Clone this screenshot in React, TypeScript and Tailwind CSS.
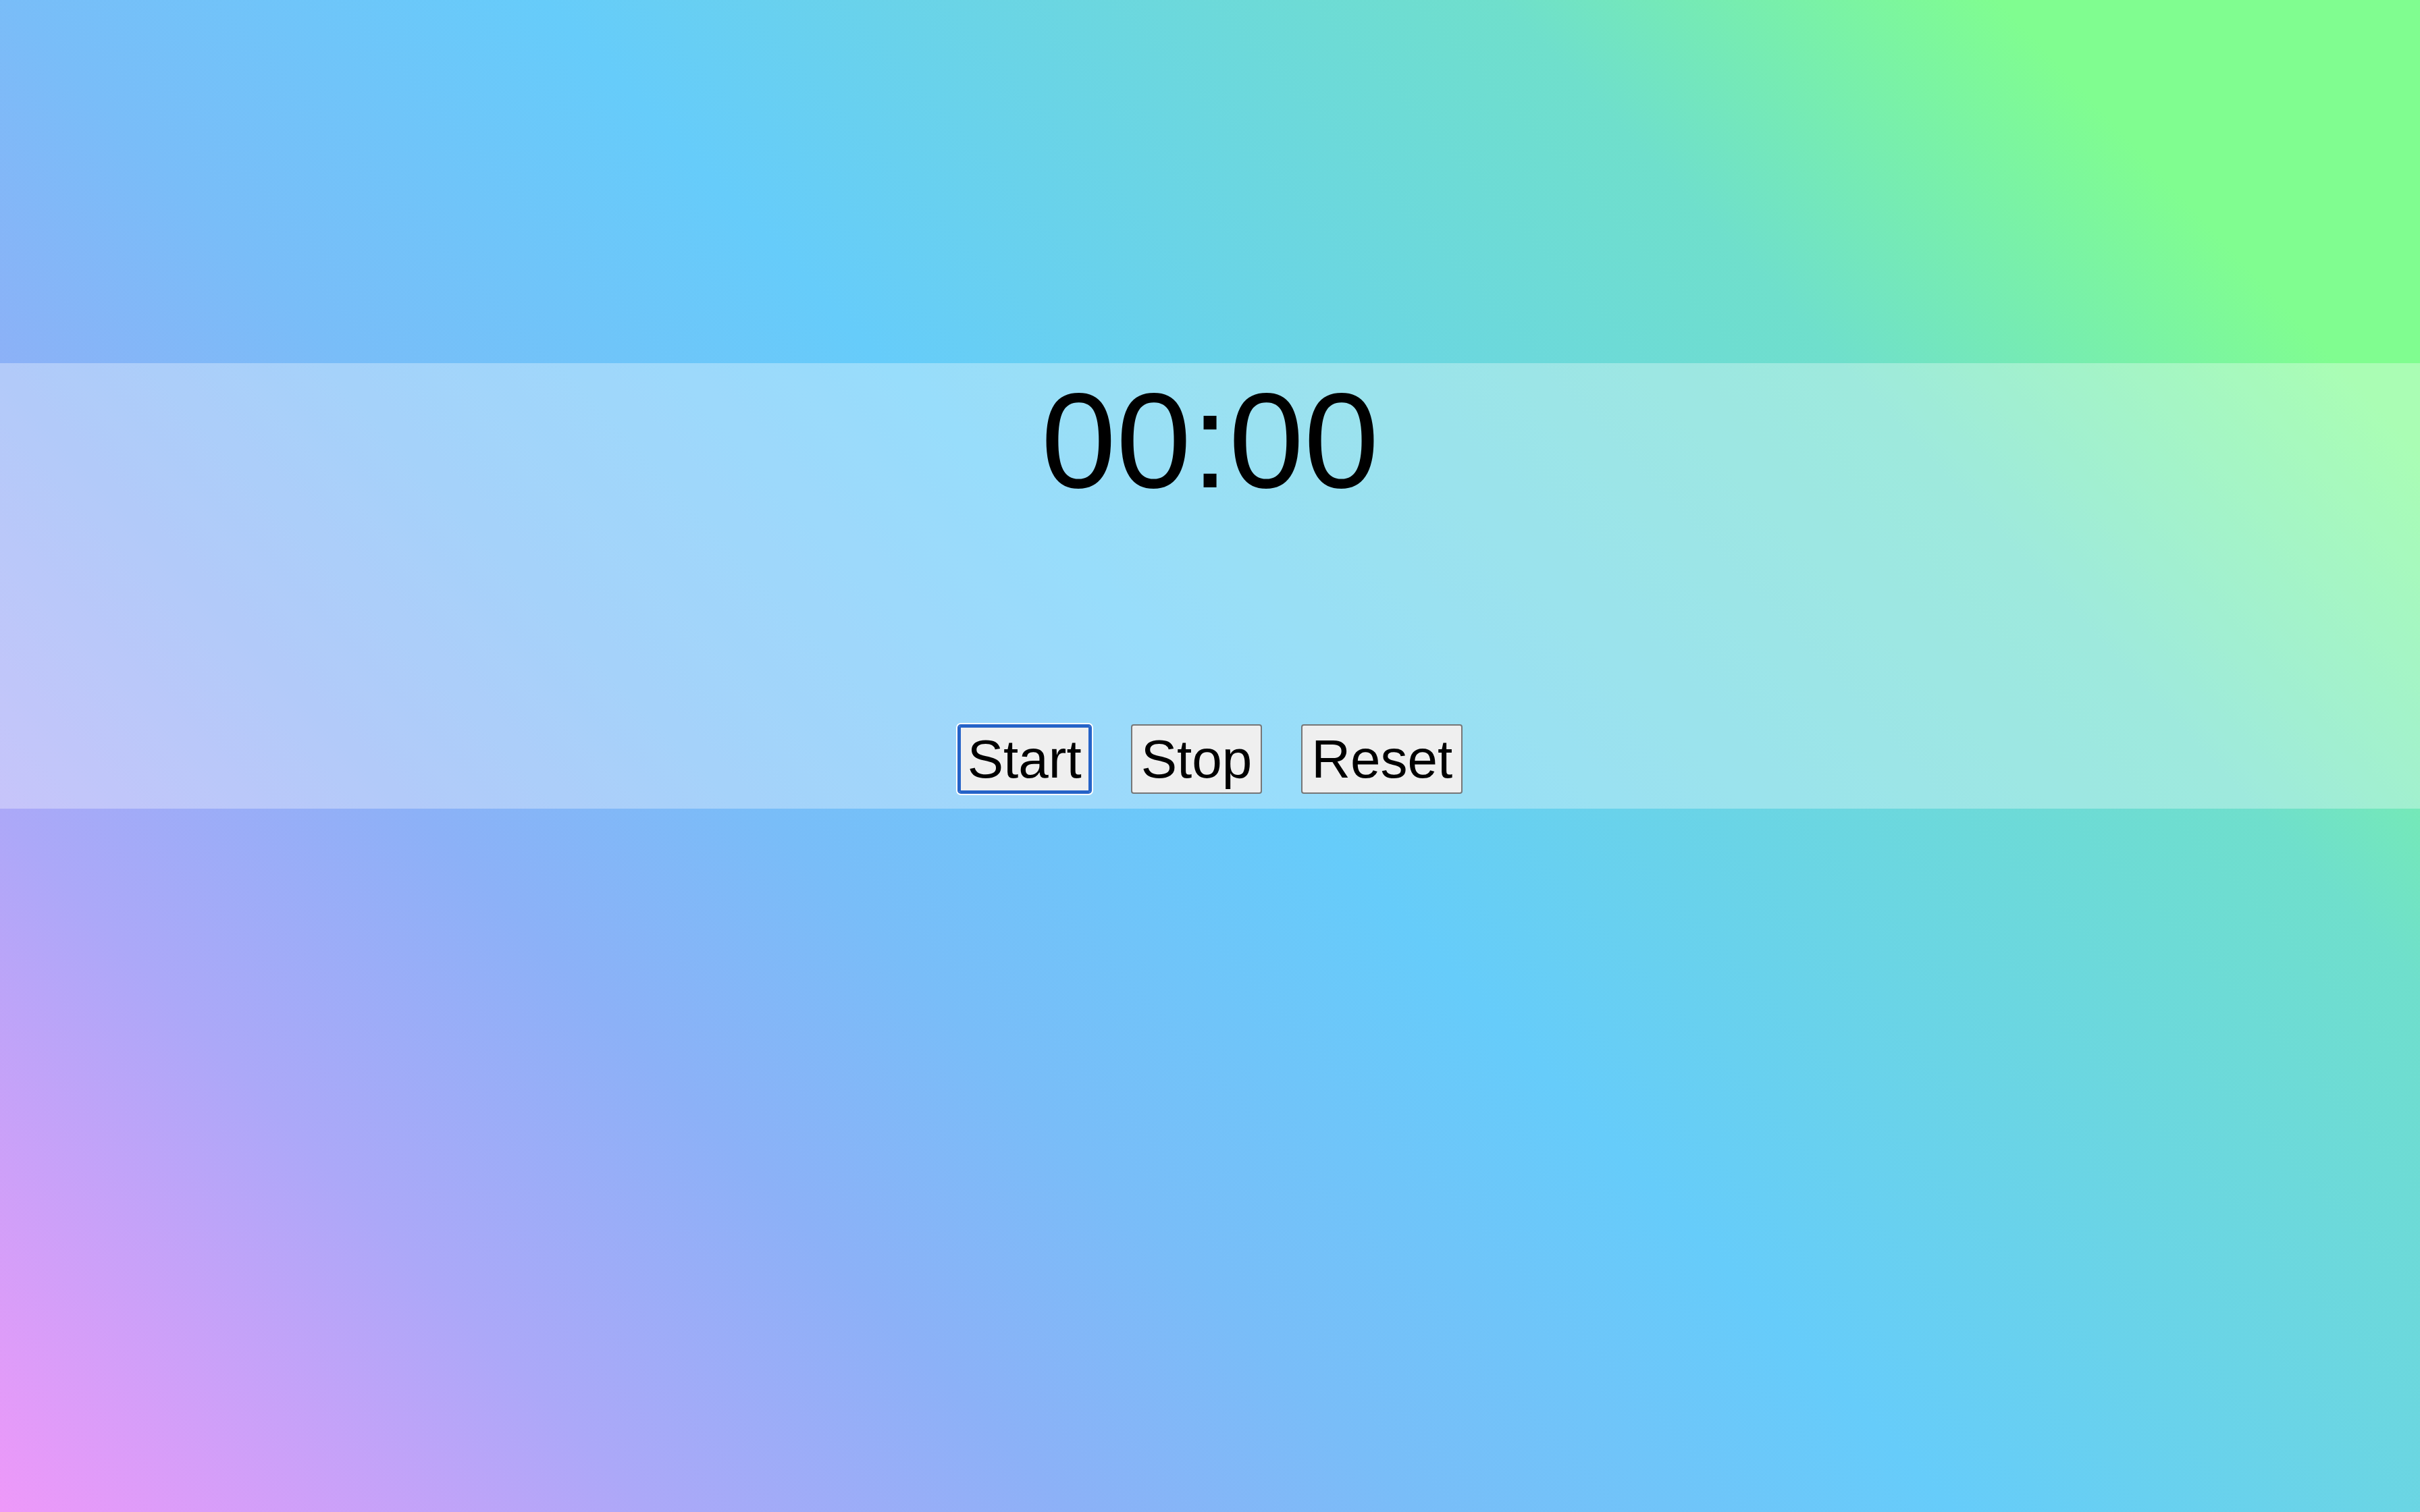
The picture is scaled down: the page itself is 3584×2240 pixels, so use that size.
export default function App() {
  return (
    <div className="min-h-screen w-full bg-[linear-gradient(47deg,#ee98f9_0%,#aca8f8_17%,#8cb1f7_28%,#79bdf8_37%,#66ccfa_51%,#6fdfcc_76%,#80fd90_89%)] pt-[538px] font-['Liberation_Sans',Arial,sans-serif] text-black">
      <div className="flex h-[660px] flex-col items-center bg-white/[0.33] pb-[22px]">
        <h1 className="text-[200px] font-normal leading-[230px]">00:00</h1>
        <div className="mt-auto flex gap-[58px]">
          <button
            type="button"
            className="h-[103px] rounded-[5px] border-2 border-[#2563c8] bg-[#efefef] px-[13px] text-[80px] leading-[92px] shadow-[inset_0_0_0_3px_#2563c8,0_0_0_2px_#ffffff]"
          >
            Start
          </button>
          <button
            type="button"
            className="h-[103px] rounded-[4px] border-2 border-[#767676] bg-[#efefef] px-[13px] text-[80px] leading-[92px]"
          >
            Stop
          </button>
          <button
            type="button"
            className="h-[103px] rounded-[4px] border-2 border-[#767676] bg-[#efefef] px-[13px] text-[80px] leading-[92px]"
          >
            Reset
          </button>
        </div>
      </div>
    </div>
  );
}
